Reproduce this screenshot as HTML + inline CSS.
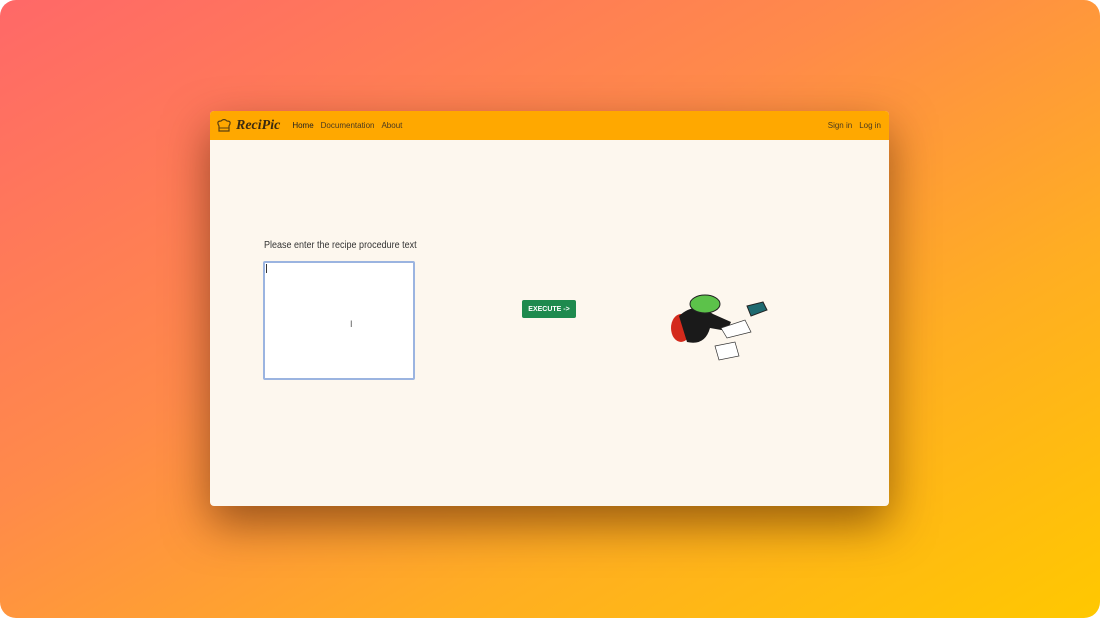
<!DOCTYPE html>
<html><head><meta charset="utf-8"><style>
html,body{margin:0;padding:0;width:1100px;height:618px;overflow:hidden;background:#fff;font-family:"Liberation Sans",sans-serif}
.bg{position:absolute;left:0;top:0;width:1100px;height:618px;border-radius:16px;background:linear-gradient(150deg,#ff6868 0%,#ff8a4a 40%,#ffae22 70%,#ffc800 100%)}
.win{position:absolute;left:210px;top:111px;width:679px;height:395px;background:#fdf7ee;border-radius:4px;overflow:hidden;box-shadow:0 18px 45px rgba(70,25,0,.55)}
.nav{height:29px;background:#ffa800;display:flex;align-items:center;font-size:8px;color:#4a3a20}
.logo{font-family:"Liberation Serif",serif;font-style:italic;font-weight:bold;font-size:14px;color:#3a2a10;margin-left:4px}
.nav a{margin-left:7px}
.r{margin-left:auto;margin-right:7px}
.lbl{position:absolute;left:54px;top:129px;font-size:10px;color:#333;transform:scaleX(.9);transform-origin:left}
.ta{position:absolute;left:53px;top:150px;width:148px;height:115px;background:#fff;border:2px solid #9bb4e0;border-radius:2px}
.btn{position:absolute;left:312px;top:189px;width:54px;height:18px;background:#1e8a4e;color:#fff;font-size:7px;font-weight:bold;border-radius:2px;display:flex;align-items:center;justify-content:center}
</style></head><body>
<div class="bg"></div>
<div class="win">
<div class="nav"><svg style="margin-left:6px" width="16" height="14" viewBox="0 0 16 14"><path d="M3 7 Q0 2 5 2 Q8 -1 11 2 Q16 2 13 7 L13 12 L3 12 Z" fill="none" stroke="#5a4010" stroke-width="1.2"/><path d="M3 9 H13" stroke="#5a4010"/></svg><span class="logo">ReciPic</span><a style="color:#222;margin-left:12px">Home</a><a>Documentation</a><a>About</a><span class="r">Sign in</span><span style="margin-right:8px">Log in</span></div>
<div class="lbl">Please enter the recipe procedure text</div>
<div class="ta"><span style="position:absolute;left:1px;top:1px;width:1px;height:9px;background:#333"></span><span style="position:absolute;left:85px;top:56px;font-size:9px;color:#555">I</span></div>
<div class="btn">EXECUTE -&gt;</div>
<svg style="position:absolute;left:455px;top:165px" width="110" height="90" viewBox="0 0 110 90">
<ellipse cx="16" cy="52" rx="10" ry="14" fill="#d42a1c"/>
<path d="M14 40 Q30 25 48 38 L66 46 L62 55 L45 52 Q40 70 22 66 Z" fill="#1a1a1a"/>
<ellipse cx="40" cy="28" rx="15" ry="9" fill="#5cc24a" stroke="#222"/>
<path d="M50 70 L70 66 L74 80 L54 84Z" fill="#fff" stroke="#333" stroke-width=".7"/>
<path d="M56 52 L80 44 L86 56 L62 62Z" fill="#fff" stroke="#333" stroke-width=".7"/>
<path d="M82 30 L98 26 L102 34 L86 40Z" fill="#1f6a70" stroke="#222"/>
</svg>
</div>
</body></html>
